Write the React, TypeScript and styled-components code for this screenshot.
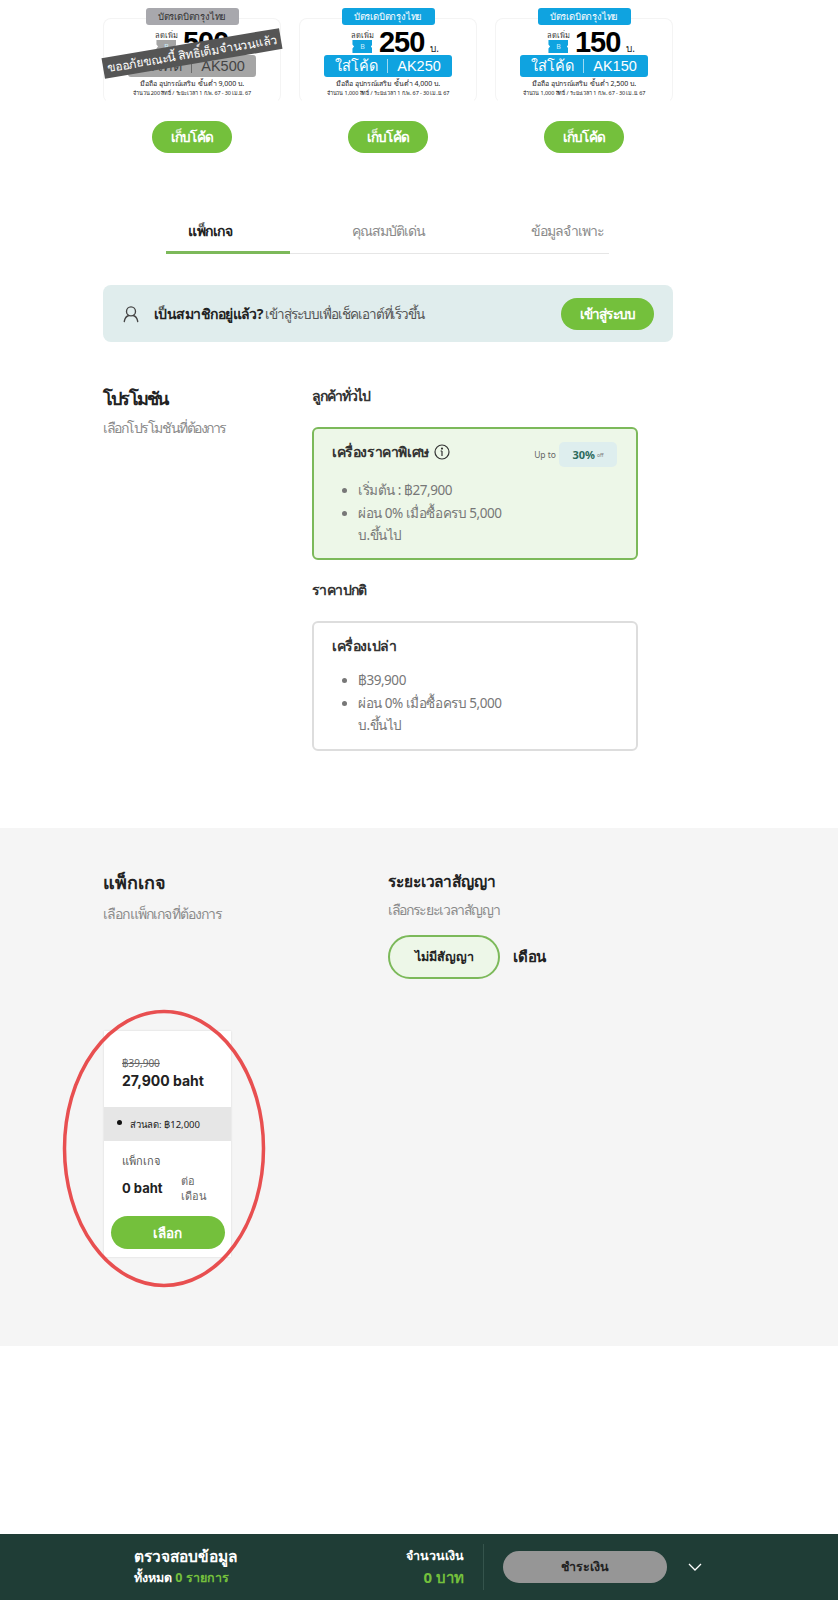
import React from "react";
import styled, { createGlobalStyle } from "styled-components";

const Global = createGlobalStyle`
  html, body { margin: 0; padding: 0; background: #fff; }
  body { font-family: "Noto Sans", "Inter", "Liberation Sans", sans-serif; color: #222; }
  * { box-sizing: border-box; }
`;
const Page = styled.div`
  width: 838px; height: 1600px; display: flex; flex-direction: column; overflow: hidden;
`;
const CouponRow = styled.div`
  display: flex; gap: 18px; padding: 18px 0 0 103px; height: 190px;
`;
const CouponCol = styled.div`
  width: 178px; display: flex; flex-direction: column; align-items: center; position: relative;
`;
const CouponCard = styled.div`
  width: 100%; height: 85px; border: 1px solid #f4f4f4; border-bottom-color: transparent; border-radius: 8px;
  display: flex; flex-direction: column; align-items: center;
`;
const CouponTab = styled.div<{ $off?: boolean }>`
  width: 93px; height: 17px; margin-top: -11px; border-radius: 3px;
  background: ${(p) => (p.$off ? "#a8a8ad" : "#0fa3e0")};
  color: ${(p) => (p.$off ? "#333" : "#fff")};
  font-size: 9.5px; line-height: 17px; text-align: center; font-weight: 500; letter-spacing: -.2px;
`;
const AmountRow = styled.div`
  display: flex; align-items: flex-end; justify-content: center; gap: 4px; height: 26px; margin-top: 3px; padding-left: 14px;
`;
const AmountLabel = styled.div`
  display: flex; flex-direction: column; align-items: center; font-size: 7.5px; line-height: 8px; color: #333; padding-bottom: 1px;
`;
const Ticket = styled.div<{ $off?: boolean }>`
  width: 20px; height: 13px; margin-top: 1px; background: ${(p) => (p.$off ? "#a5a5a5" : "#0fa3e0")};
  color: #cdeefc; font-size: 7px; line-height: 13px; text-align: center;
  clip-path: polygon(0 0, 100% 0, 100% 35%, 92% 50%, 100% 65%, 100% 100%, 0 100%, 0 65%, 8% 50%, 0 35%);
`;
const Amount = styled.div`
  font: 700 29px/24px "Liberation Sans", sans-serif; color: #000; letter-spacing: -1px; margin: 0 2px 0 1px;
`;
const Unit = styled.span`
  font-size: 10px; line-height: 12px; color: #222;
`;
const CodeBar = styled.div<{ $off?: boolean }>`
  width: 128px; height: 22px; margin-top: 1px; border-radius: 3px; display: flex; align-items: center; justify-content: center; gap: 9px;
  background: ${(p) => (p.$off ? "#a5a5a5" : "#0fa3e0")};
  color: ${(p) => (p.$off ? "#444" : "#fff")};
  font: 400 14.5px/22px "Liberation Sans", "Noto Sans", sans-serif;
`;
const CodeDivider = styled.i`
  width: 1px; height: 14px; background: currentColor; opacity: .6;
`;
const Fine = styled.div`
  font-size: 7px; line-height: 10px; color: #222; margin-top: 2px; white-space: nowrap;
`;
const Finer = styled(Fine)`
  font-size: 5.5px; line-height: 8px; margin-top: 0; letter-spacing: -.1px;
`;
const Stamp = styled.div`
  position: absolute; left: -1px; top: 25px; width: 180px; height: 21px; background: #555;
  color: #fff; font-size: 12px; line-height: 21px; text-align: center; transform: rotate(-9.6deg); white-space: nowrap; letter-spacing: -.1px;
`;
const PillButton = styled.button<{ $w: number; $h: number; $ls?: number }>`
  width: ${(p) => p.$w}px; height: ${(p) => p.$h}px; border: 0; border-radius: 999px; background: #74c03c;
  color: #fff; font: 700 13.5px "Noto Sans", "Inter", sans-serif; padding: 0; flex: none;
  letter-spacing: ${(p) => p.$ls ?? 0}px;
`;
const CollectButton = styled(PillButton)`
  margin-top: 18px;
`;
const Tabs = styled.div`
  display: flex; margin: 20px 0 0 166px; width: 443px; height: 44px; border-bottom: 1px solid #e6e6e6;
`;
const Tab = styled.div<{ $w: number; $pl: number; $active?: boolean }>`
  width: ${(p) => p.$w}px; padding-left: ${(p) => p.$pl}px; height: 44px; line-height: 42px; font-size: 14px; white-space: nowrap;
  color: ${(p) => (p.$active ? "#222" : "#8a8a8a")}; font-weight: ${(p) => (p.$active ? 700 : 400)};
  letter-spacing: ${(p) => (p.$active ? "-.4px" : "-1px")};
  border-bottom: ${(p) => (p.$active ? "3px solid #7cb95a" : "0")};
`;
const Banner = styled.div`
  margin: 31px 0 0 103px; width: 570px; height: 57px; background: #e0eded; border-radius: 8px;
  display: flex; align-items: center; padding: 0 19px 0 19px; font-size: 14px; color: #555;
`;
const BannerText = styled.div`
  margin-left: 14px; flex: 1; white-space: nowrap; font-size: 13.5px; letter-spacing: -1.05px;
  b { color: #222; font-size: 14px; letter-spacing: -.55px; }
`;
const PromoSection = styled.div`
  display: flex; padding: 44px 0 0 103px; height: 486px;
`;
const SideCol = styled.div<{ $w: number }>`
  width: ${(p) => p.$w}px; flex: none;
`;
const Heading = styled.h2<{ $ls?: number }>`
  margin: 0; font-size: 18px; line-height: 24px; font-weight: 700; color: #222; letter-spacing: ${(p) => p.$ls ?? 0}px;
`;
const Sub = styled.p<{ $ls: number; $top?: number }>`
  margin: ${(p) => p.$top ?? 8}px 0 0; font-size: 14px; line-height: 20px; color: #8a8a8a; letter-spacing: ${(p) => p.$ls}px;
`;
const GroupLabel = styled.div<{ $ls: number; $top: number }>`
  font-size: 14px; line-height: 20px; font-weight: 600; color: #333; margin-top: ${(p) => p.$top}px; letter-spacing: ${(p) => p.$ls}px;
`;
const OptionCard = styled.div<{ $on?: boolean; $h: number }>`
  position: relative; width: 326px; height: ${(p) => p.$h}px; margin-top: 21px; padding: 13px 18px; border-radius: 6px;
  border: 2px solid ${(p) => (p.$on ? "#7cb95a" : "#dddddd")};
  background: ${(p) => (p.$on ? "#edf7e8" : "#fff")};
`;
const OptionTitle = styled.div`
  display: flex; align-items: center; gap: 5px; font-size: 14px; line-height: 20px; font-weight: 700; color: #333; letter-spacing: -.4px;
`;
const Bullets = styled.ul<{ $top: number }>`
  margin: ${(p) => p.$top}px 0 0; padding: 0 95px 0 26px; font-size: 13.5px; line-height: 22.5px; color: #777; letter-spacing: -.45px;
  li::marker { color: #777; }
`;
const UpTo = styled.div`
  position: absolute; right: 19px; top: 13px; display: flex; align-items: center; gap: 3px; font-size: 8.5px; color: #666;
`;
const OffChip = styled.span`
  width: 58px; height: 25px; border-radius: 5px; background: #deeeee; color: #2b6a5c; font-size: 11px; font-weight: 700;
  display: flex; align-items: center; justify-content: center; gap: 2px;
  small { font-size: 5px; font-weight: 400; color: #777; }
`;
const Gray = styled.section`
  position: relative; height: 518px; background: #f5f5f5; padding: 42px 0 0 103px;
`;
const GrayTop = styled.div`
  display: flex;
`;
const ContractHeading = styled.h3`
  margin: 0; font-size: 15.5px; line-height: 22px; font-weight: 700; color: #222; letter-spacing: -.1px;
`;
const ContractRow = styled.div`
  display: flex; align-items: center; gap: 13px; margin-top: 15px;
`;
const ContractPill = styled.div`
  width: 112px; height: 44px; border: 2px solid #7cb95a; border-radius: 22px; background: #edf7e8;
  font-size: 12.5px; font-weight: 700; line-height: 40px; text-align: center; color: #222;
`;
const Month = styled.span`
  font-size: 15px; font-weight: 700; color: #222; letter-spacing: -.2px;
`;
const PackageCard = styled.div`
  position: relative; width: 127px; height: 226px; margin: 52px 0 0 1px; background: #fff; box-shadow: 0 0 2px rgba(0,0,0,.12);
  display: flex; flex-direction: column;
`;
const OldPrice = styled.s`
  display: block; margin: 26px 0 0 18px; font-size: 10px; line-height: 12px; color: #666;
`;
const NewPrice = styled.div`
  margin: 2px 0 0 18px; font: 700 14px/20px "Inter", "Liberation Sans", sans-serif; color: #222;
`;
const Saving = styled.div`
  height: 34px; margin-top: 16px; background: #e6e6e6; display: flex; align-items: center; gap: 8px; padding-left: 13px;
  font-size: 9.5px; color: #222;
`;
const Dot = styled.i`
  width: 5px; height: 5px; border-radius: 50%; background: #111; margin-top: -4px;
`;
const PkgLabel = styled.div`
  margin: 12px 0 0 18px; font-size: 11px; line-height: 16px; color: #555;
`;
const PkgPrice = styled.div`
  display: flex; align-items: center; margin: 0 0 0 18px; height: 37px; gap: 18px;
  font: 700 13px "Inter", "Liberation Sans", sans-serif; color: #222;
`;
const PerMonth = styled.span`
  width: 26px; font: 400 11px/15px "Noto Sans", sans-serif; color: #666;
`;
const SelectWrap = styled.div`
  display: flex; justify-content: center; margin-top: 10px;
`;
const Ellipse = styled.svg`
  position: absolute; left: 63px; top: 182px; width: 202px; height: 277px; overflow: visible; pointer-events: none;
`;
const Spacer = styled.div`
  flex: 1;
`;
const Footer = styled.footer`
  height: 66px; background: #1f3d36; display: flex; align-items: center; padding-left: 134px; color: #fff;
`;
const FooterLeft = styled.div`
  width: 247px;
`;
const CheckTitle = styled.div`
  font-size: 15.5px; line-height: 22px; font-weight: 700; margin-top: -3px; margin-bottom: 2px;
`;
const CheckCount = styled.div`
  font-size: 12.5px; line-height: 18px; font-weight: 700;
  span { color: #74c03c; }
`;
const FooterAmount = styled.div`
  width: 83px; text-align: right;
`;
const AmountTitle = styled.div`
  font-size: 12.5px; line-height: 20px; font-weight: 700;
`;
const AmountValue = styled.div`
  font-size: 15px; line-height: 22px; font-weight: 700; color: #74c03c;
`;
const FooterDivider = styled.i`
  width: 1px; height: 46px; background: #35544c; margin: 0 19px 0 19px;
`;
const PayButton = styled.button`
  width: 164px; height: 32px; border: 0; border-radius: 16px; background: #969696; color: #222;
  font: 700 12.5px "Noto Sans", sans-serif;
`;
const Chevron = styled.svg`
  margin-left: 21px;
`;

const coupons = [
  { amount: "500", code: "AK500", min: "9,000", fine: "จำนวน 200 สิทธิ์ / ระยะเวลา 1 ก.พ. 67 - 30 เม.ย. 67", off: true },
  { amount: "250", code: "AK250", min: "4,000", fine: "จำนวน 1,000 สิทธิ์ / ระยะเวลา 1 ก.พ. 67 - 30 เม.ย. 67" },
  { amount: "150", code: "AK150", min: "2,500", fine: "จำนวน 1,000 สิทธิ์ / ระยะเวลา 1 ก.พ. 67 - 30 เม.ย. 67" },
];

export default function App() {
  return (
    <Page>
      <Global />
      <CouponRow>
        {coupons.map((c) => (
          <CouponCol key={c.code}>
            <CouponCard>
              <CouponTab $off={c.off}>บัตรเดบิตกรุงไทย</CouponTab>
              <AmountRow>
                <AmountLabel>ลดเพิ่ม<Ticket $off={c.off}>B</Ticket></AmountLabel>
                <Amount>{c.amount}</Amount>
                <Unit>บ.</Unit>
              </AmountRow>
              <CodeBar $off={c.off}>ใส่โค้ด<CodeDivider />{c.code}</CodeBar>
              <Fine>มือถือ อุปกรณ์เสริม ขั้นต่ำ {c.min} บ.</Fine>
              <Finer>{c.fine}</Finer>
            </CouponCard>
            {c.off && <Stamp>ขออภัยขณะนี้ สิทธิ์เต็มจำนวนแล้ว</Stamp>}
            <CollectButton $w={80} $h={32} $ls={-0.7}>เก็บโค้ด</CollectButton>
          </CouponCol>
        ))}
      </CouponRow>
      <Tabs>
        <Tab $w={124} $pl={22} $active>แพ็กเกจ</Tab>
        <Tab $w={179} $pl={62}>คุณสมบัติเด่น</Tab>
        <Tab $w={140} $pl={62}>ข้อมูลจำเพาะ</Tab>
      </Tabs>
      <Banner>
        <svg width="18" height="18" viewBox="0 0 24 24" fill="none" stroke="#444" strokeWidth="1.8" strokeLinecap="round">
          <circle cx="12" cy="8.5" r="6" />
          <path d="M3 22c1-5 4-7.5 6-8M21 22c-1-5-4-7.5-6-8" />
        </svg>
        <BannerText><b>เป็นสมาชิกอยู่แล้ว?</b> เข้าสู่ระบบเพื่อเช็คเอาต์ที่เร็วขึ้น</BannerText>
        <PillButton $w={93} $h={32} $ls={-0.9}>เข้าสู่ระบบ</PillButton>
      </Banner>
      <PromoSection>
        <SideCol $w={209}>
          <Heading $ls={-1.8}>โปรโมชัน</Heading>
          <Sub $ls={-1.45}>เลือกโปรโมชันที่ต้องการ</Sub>
        </SideCol>
        <div>
          <GroupLabel $ls={-1.1} $top={0}>ลูกค้าทั่วไป</GroupLabel>
          <OptionCard $on $h={133}>
            <OptionTitle>
              เครื่องราคาพิเศษ
              <svg width="16" height="16" viewBox="0 0 16 16" fill="none" stroke="#333" strokeWidth="1.2">
                <circle cx="8" cy="8" r="7" />
                <path d="M8 7v5M6.6 7H8" />
                <circle cx="8" cy="4.6" r=".5" fill="#333" />
              </svg>
            </OptionTitle>
            <UpTo>Up to <OffChip>30% <small>off</small></OffChip></UpTo>
            <Bullets $top={17}>
              <li>เริ่มต้น : ฿27,900</li>
              <li>ผ่อน 0% เมื่อซื้อครบ 5,000 บ.ขึ้นไป</li>
            </Bullets>
          </OptionCard>
          <GroupLabel $ls={-0.6} $top={20}>ราคาปกติ</GroupLabel>
          <OptionCard $h={130}>
            <OptionTitle>เครื่องเปล่า</OptionTitle>
            <Bullets $top={13}>
              <li>฿39,900</li>
              <li>ผ่อน 0% เมื่อซื้อครบ 5,000 บ.ขึ้นไป</li>
            </Bullets>
          </OptionCard>
        </div>
      </PromoSection>
      <Gray>
        <GrayTop>
          <SideCol $w={285}>
            <Heading>แพ็กเกจ</Heading>
            <Sub $ls={-0.85} $top={10}>เลือกแพ็กเกจที่ต้องการ</Sub>
          </SideCol>
          <div>
            <ContractHeading>ระยะเวลาสัญญา</ContractHeading>
            <Sub $ls={-1.35} $top={8}>เลือกระยะเวลาสัญญา</Sub>
            <ContractRow>
              <ContractPill>ไม่มีสัญญา</ContractPill>
              <Month>เดือน</Month>
            </ContractRow>
          </div>
        </GrayTop>
        <PackageCard>
          <OldPrice>฿39,900</OldPrice>
          <NewPrice>27,900 baht</NewPrice>
          <Saving><Dot />ส่วนลด: ฿12,000</Saving>
          <PkgLabel>แพ็กเกจ</PkgLabel>
          <PkgPrice>0 baht<PerMonth>ต่อเดือน</PerMonth></PkgPrice>
          <SelectWrap><PillButton $w={114} $h={33}>เลือก</PillButton></SelectWrap>
        </PackageCard>
        <Ellipse viewBox="0 0 202 277">
          <ellipse cx="101" cy="138.5" rx="99.5" ry="137" fill="none" stroke="#e84f50" strokeWidth="3.5" />
        </Ellipse>
      </Gray>
      <Spacer />
      <Footer>
        <FooterLeft>
          <CheckTitle>ตรวจสอบข้อมูล</CheckTitle>
          <CheckCount>ทั้งหมด <span>0 รายการ</span></CheckCount>
        </FooterLeft>
        <FooterAmount>
          <AmountTitle>จำนวนเงิน</AmountTitle>
          <AmountValue>0 บาท</AmountValue>
        </FooterAmount>
        <FooterDivider />
        <PayButton>ชำระเงิน</PayButton>
        <Chevron width="14" height="8" viewBox="0 0 14 8" fill="none" stroke="#fff" strokeWidth="1.3">
          <path d="M1 1l6 6 6-6" />
        </Chevron>
      </Footer>
    </Page>
  );
}
